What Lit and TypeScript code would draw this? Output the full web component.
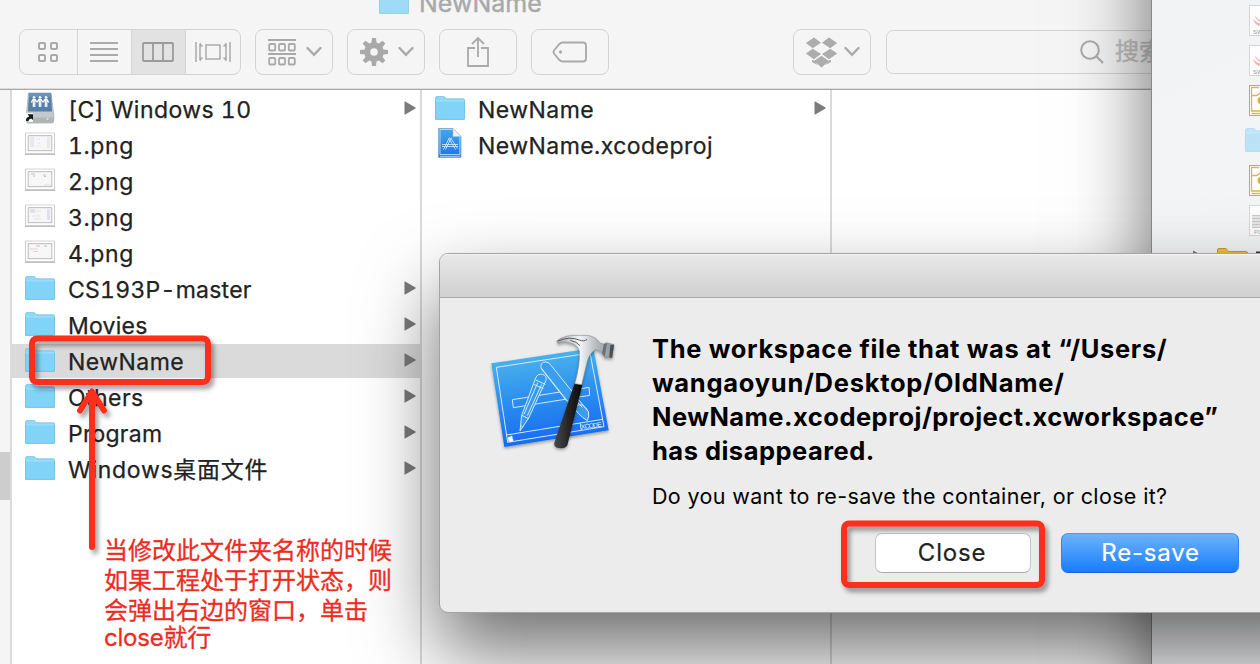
import { LitElement, html, svg, css } from "lit";
import { customElement, property } from "lit/decorators.js";

type Kind = "drive" | "image" | "folder" | "project";
interface Entry { name: string; kind: Kind; parent?: boolean; selected?: boolean; tint?: number; fit: string }

const FIRST: Entry[] = [
  { name: "[C] Windows 10", kind: "drive", parent: true, fit: "word" },
  { name: "1.png", kind: "image", tint: 0, fit: "file" },
  { name: "2.png", kind: "image", tint: 1, fit: "file" },
  { name: "3.png", kind: "image", tint: 2, fit: "file" },
  { name: "4.png", kind: "image", tint: 3, fit: "file" },
  { name: "CS193P-master", kind: "folder", parent: true, fit: "tight" },
  { name: "Movies", kind: "folder", parent: true, fit: "tight" },
  { name: "NewName", kind: "folder", parent: true, selected: true, fit: "word" },
  { name: "Others", kind: "folder", parent: true, fit: "word" },
  { name: "Program", kind: "folder", parent: true, fit: "tight" },
  { name: "Windows桌面文件", kind: "folder", parent: true, fit: "wide" },
];
const SECOND: Entry[] = [
  { name: "NewName", kind: "folder", parent: true, fit: "word" },
  { name: "NewName.xcodeproj", kind: "project", fit: "word" },
];

const folder = () => html`<svg width="30" height="26" viewBox="0 0 30 26">
  <path d="M0.5 3Q0.5 1.5 2 1.5H8.5Q10 1.5 10.5 2.8T12 3.8H28.5Q29.5 3.8 29.5 5V8H0.5Z" fill="#8ed8f8" stroke="#79c5e6" stroke-width=".8"/>
  <path d="M0.5 6H29.5V23.5Q29.5 24.5 28.5 24.5H1.5Q.5 24.5 .5 23.5Z" fill="#82d3f8"/>
  <path d="M0.5 6H29.5" stroke="#9fe2fb"/><path d="M.5 6V24.4H29.5V6" fill="none" stroke="#6fbfe2" stroke-width=".9"/></svg>`;

const drive = () => html`<svg width="30" height="32" viewBox="0 0 30 32">
  <path d="M3.5 1H26L29 25Q29 31 27 31H3Q1 31 1 27Z" fill="#c3c9cb" stroke="#a1a8ab" stroke-width=".7"/>
  <path d="M1.3 25.5H28.8V29.5Q28.7 31 27 31H3Q1.2 31 1.2 29Z" fill="#aeb5b6"/>
  <path d="M4 1H26L27 19.5H3Z" fill="#557fa9"/><path d="M4 1H26L26.3 5H3.8Z" fill="#6c93b8"/>
  <g stroke="#fff" fill="#fff" stroke-linecap="round"><circle cx="9" cy="5.4" r=".9"/><circle cx="15" cy="5.4" r=".9"/><circle cx="21" cy="5.4" r=".9"/>
  <path fill="none" stroke-width="1.2" d="M6.5 10L8 7.4H10L12 10L14 7.4H16L18 10L20 7.4H22L23.5 10M8.3 8V14.5M9.8 8V14.5M14.3 8V14.5M15.8 8V14.5M20.3 8V14.5M21.8 8V14.5"/></g>
  <path d="M0 21H8V30H0Z" fill="#fff" opacity=".9"/><path d="M1 29Q.5 25.5 4.2 24.4L2.6 22.2H8V28L6.2 26.4Q3.4 27 3.3 29.6Z" fill="#181818"/>
  <circle cx="22.5" cy="27" r="1" fill="#e4e8e6"/></svg>`;

const THUMBS = [
  svg`<path d="M5 5h4v10H5zM22 5h3v11h-3z" fill="#e6e7f0"/><path d="M11 7h4M12 11h3M10 14h6" stroke="#e6e7ea"/>`,
  svg`<path d="M6 6h4M8 8h2M18 7h3M19 8.500h2" stroke="#c6c6ba"/><path d="M19 17h7" stroke="#ecd8d8"/>`,
  svg`<path d="M5 5h5v4H5zM22 5h3v11h-3z" fill="#dfe1ee"/><path d="M11 7h5M7 12h8M9 15h7" stroke="#e4e5ec"/>`,
  svg`<path d="M11 6h4M19 6h3" stroke="#cdbcc4"/><path d="M5 9h8M8 11.500h5" stroke="#eccccc"/>`,
];
const thumb = (n: number) => html`<svg width="30" height="24" viewBox="0 0 30 24">
  <rect x="0" y="1.500" width="30" height="21.500" fill="#b0b0b0" opacity=".8"/><rect x=".5" y="1" width="29" height="20.500" fill="#fff" stroke="#c4c4c4" stroke-width=".7"/>
  <rect x="3.200" y="3.700" width="23.600" height="15" fill="#f7f7f7" stroke="#b4b4b4" stroke-width=".9"/>${THUMBS[n]}</svg>`;

const project = () => html`<svg width="30" height="32" viewBox="0 0 30 32">
  <defs><linearGradient id="pj" x2="0" y2="1"><stop stop-color="#45a9ea"/><stop offset="1" stop-color="#1976f0"/></linearGradient></defs>
  <path d="M3.500 .5H18L26 8.500V29.500H3.500Z" fill="url(#pj)" stroke="#7fa5c4" stroke-width=".8"/>
  <path d="M17.500 1.500H5V26.500H24.800V9" fill="none" stroke="#c9e5fb" stroke-width=".8"/><path d="M5 28.300H25" stroke="#c9e5fb" stroke-width=".8"/>
  <path d="M18 .5L26 8.500H18Z" fill="#f1f1f1" stroke="#bcc3ca" stroke-width=".5"/>
  <path d="M7 16.500H23M7 18.500H23M14.500 9.500L8.500 21.500M16.500 9.500L10.500 21.500M14 10.500L20.500 21.500M16 10.500L22.500 20.500" fill="none" stroke="#dceefd" stroke-width=".8"/></svg>`;

@customElement("finder-column")
class FinderColumn extends LitElement {
  @property({ attribute: false }) entries: Entry[] = [];
  static styles = css`
    :host { display: flex; flex-direction: column; gap: 2px; padding-top: 2px; box-sizing: border-box; border-right: 2px solid #dadada; }
    .row { display: grid; grid-template-columns: 30px 1fr 12px; column-gap: 13px; align-items: center; height: 34px; flex: none; padding: 0 4px 0 13px; }
    .selected { background: #dadada; }
    .icon { display: flex; justify-content: center; align-items: center; height: 32px; margin-top: -2px; }
    .label { white-space: nowrap; line-height: 34px; padding-top: 1px; height: 33px; font-feature-settings: "tnum"; -webkit-text-stroke: .25px #222; }
    .arrow { display: block; margin-top: -2px; }
    .word { letter-spacing: .45px; }
    .file { letter-spacing: .6px; }
    .tight { letter-spacing: .25px; }
    .wide { letter-spacing: .72px; }
  `;
  icon(e: Entry) {
    if (e.kind === "drive") return drive();
    if (e.kind === "image") return thumb(e.tint ?? 0);
    if (e.kind === "project") return project();
    return folder();
  }
  render() {
    return this.entries.map(e => html`<div class="row ${e.selected ? "selected" : ""}">
      <span class="icon">${this.icon(e)}</span><span class="label ${e.fit}">${e.name}</span>
      ${e.parent ? html`<svg class="arrow" width="12" height="14" viewBox="0 0 12 14"><path d="M.5 .8Q.5 .2 1.200 .5L11.500 6.400Q12 7 11.500 7.500L1.200 13.500Q.5 13.800 .5 13.200Z" fill="#7b7b7b"/></svg>` : ""}
    </div>`);
  }
}

const chevron = html`<svg width="16" height="12" viewBox="0 0 16 12"><path d="M1.500 2L8 8.800L14.500 2" fill="none" stroke="#a9a9a9" stroke-width="2.400" stroke-linecap="round"/></svg>`;

@customElement("finder-window")
class FinderWindow extends LitElement {
  static styles = css`
    :host { display: grid; grid-template-rows: 88px 1fr; background: #fff; overflow: hidden; }
    .head { background: #f5f5f5; border-bottom: 1px solid #a8a8a8; box-shadow: inset 0 -1px #dcdcdc; box-sizing: border-box; height: 90px; }
    .title { display: flex; gap: 10px; height: 29px; padding-left: 379px; color: #a9a9a9; font-size: 25px; line-height: 28px; -webkit-text-stroke: .4px #a9a9a9; }
    .title svg { margin-top: -11px; opacity: .75; }
    .title span { margin-top: -11px; }
    .tools { display: flex; padding-left: 19px; }
    .btn, .segs { box-sizing: border-box; height: 46px; border: 1px solid #d4d4d4; border-radius: 8px; display: flex; align-items: center; }
    .btn { width: 78px; margin-right: 14px; justify-content: center; gap: 10px; }
    .menu { padding-left: 2px; }
    .segs { width: 222px; margin-right: 14px; overflow: hidden; }
    .seg { display: flex; align-items: center; justify-content: center; height: 100%; width: 54px; box-sizing: border-box; border-right: 1px solid #d4d4d4; }
    .seg:first-child { width: 58px; padding-right: 1px; }
    .seg:nth-child(2), .seg:nth-child(3) { padding-right: 1px; }
    .seg:last-child { border: 0; flex: 1; }
    .on { background: #e2e2e2; }
    .drop { margin: 0 15px 0 170px; gap: 6px; }
    .search { box-sizing: border-box; width: 400px; height: 44px; margin-top: 1px; border: 1px solid #d4d4d4; border-radius: 7px; flex: none; display: flex; align-items: center; gap: 11px; padding-left: 193px; color: #c2c2c2; font-size: 24px; -webkit-text-stroke: .4px #c2c2c2; }
    .cols { display: grid; grid-template-columns: 12px 410px 410px 1fr; margin-top: 2px; }
    .side { background: #f5f5f5; border-right: 2px solid #dadada; padding-top: 362px; box-sizing: border-box; }
    .thumb { height: 48px; background: #cdcdcd; }
  `;
  render() {
    const box = (x: number, y: number) => svg`<rect x=${x} y=${y} width="6" height="6.500" rx="1"/>`;
    return html`
      <div class="head">
        <div class="title">${folder()}<span>NewName</span></div>
        <div class="tools">
          <div class="segs">
            <span class="seg"><svg width="22" height="22" viewBox="0 0 22 22" fill="none" stroke="#aaa" stroke-width="2"><rect x="2" y="2" width="6" height="6" rx="1"/><rect x="14" y="2" width="6" height="6" rx="1"/><rect x="2" y="14" width="6" height="6" rx="1"/><rect x="14" y="14" width="6" height="6" rx="1"/></svg></span>
            <span class="seg"><svg width="28" height="20" viewBox="0 0 28 20" stroke="#aaa" stroke-width="2"><path d="M0 1H28M0 7H28M0 13H28M0 19H28"/></svg></span>
            <span class="seg on"><svg width="32" height="20" viewBox="0 0 32 20" fill="none" stroke="#9b9b9b" stroke-width="1.800"><rect x="1" y="1" width="30" height="18" rx="1"/><path d="M11 1V19M21 1V19"/></svg></span>
            <span class="seg"><svg width="38" height="22" viewBox="0 0 38 22" fill="none" stroke="#aaa" stroke-width="1.500"><rect x="12" y="4" width="14" height="14"/><path d="M2 1V21M36 1V21M6 2.500V19.500M32 2.500V19.500"/><path d="M6 1.500L9.300 5.500H6ZM6 20.500L9.300 16.500H6ZM32 1.500L28.700 5.500H32ZM32 20.500L28.700 16.500H32Z" fill="#aaa" stroke="none"/></svg></span>
          </div>
          <div class="btn menu"><svg width="28" height="27" viewBox="0 0 28 27" fill="none" stroke="#a9a9a9" stroke-width="1.800"><path d="M0 1H28M0 15H28"/>${box(1.2, 5)}${box(11, 5)}${box(20.8, 5)}${box(1.2, 19)}${box(11, 19)}${box(20.8, 19)}</svg>${chevron}</div>
          <div class="btn menu"><svg width="28" height="28" viewBox="-14 -14 28 28"><circle r="6.800" fill="none" stroke="#a9a9a9" stroke-width="6"/>${[0, 45, 90, 135].map(a => svg`<path d="M-2.600 -9L-2 -14H2L2.600 -9ZM-2.600 9L-2 14H2L2.600 9Z" fill="#a9a9a9" transform="rotate(${a})"/>`)}</svg>${chevron}</div>
          <div class="btn"><svg width="24" height="32" viewBox="0 0 24 32" fill="none" stroke="#aaa" stroke-width="1.800"><path d="M9 12H2V30H22V12H15M12 21V2M6 8L12 2L18 8"/></svg></div>
          <div class="btn"><svg width="36" height="22" viewBox="0 0 36 22" fill="none" stroke="#aaa" stroke-width="1.900"><path d="M10.500 1.500H31Q34 1.500 34 4.500V17.500Q34 20.500 31 20.500H10.500Q9 20.500 7.500 19L2 12.500Q1 11 2 9.500L7.500 3Q9 1.500 10.500 1.500Z"/><circle cx="8.500" cy="11" r="1.200" fill="#aaa" stroke-width="1"/></svg></div>
          <div class="btn drop"><svg width="33" height="31" viewBox="0 0 33 31" fill="#acacac"><path d="M9 .5L16 5.700L7.700 11.300L.8 6ZM24 .5L32.200 6L25.300 11.300L17 5.700ZM.8 16.500L7.700 11.800L16 17L9 22.200ZM25.300 11.800L32.200 16.500L24 22.200L17 17ZM16.500 18.700L24 24L16.500 30.500L9 24ZM7 23L9 23.500L12.500 28L7 25ZM26 23L24 23.500L20.500 28L26 25Z"/></svg>${chevron}</div>
          <div class="search"><svg width="24" height="26" viewBox="0 0 24 26" fill="none" stroke="#aaa" stroke-width="2"><circle cx="10" cy="11" r="8.800"/><path d="M16.500 17.500L23 24"/></svg><span>搜索</span></div>
        </div>
      </div>
      <div class="cols">
        <div class="side"><div class="thumb"></div></div>
        <finder-column .entries=${FIRST}></finder-column>
        <finder-column .entries=${SECOND}></finder-column>
      </div>`;
  }
}

@customElement("editor-window")
class EditorWindow extends LitElement {
  static styles = css`
    :host { display: block; background: linear-gradient(150deg, #eff1f3, #f3f4f6 30%, #f1f2f4); border-left: 1px solid #888; box-sizing: border-box; box-shadow: 0 0 76px rgba(0,0,0,.57); }
    .item { height: 40px; display: flex; align-items: center; padding-left: 97px; }
    .dir { padding-left: 93px; opacity: .5; }
    .group { padding-left: 41px; align-items: flex-start; padding-top: 7px; }
    svg { flex: none; }
  `;
  render() {
    const swift = html`<svg width="30" height="31" viewBox="0 0 30 31"><rect x=".5" y=".5" width="29" height="30" fill="#fdfdfd" stroke="#d4d5d7"/><path d="M3.500 14Q9 19 12 18Q7 14 5 10Q10 15 15 18L14 21Q7 22 3.500 14ZM11 10Q14 12 15 16Z" fill="#f6b2ac"/><text x="4" y="28.500" font-size="6" fill="#999" font-family="Liberation Sans">SWIFT</text></svg>`;
    const board = html`<svg width="30" height="31" viewBox="0 0 30 31"><rect x=".5" y=".5" width="29" height="30" fill="#fff" stroke="#b8a88a"/><path d="M10 2.500H2.500V26H30M2.500 28.500H30M2.500 10.500H8L11 8" fill="none" stroke="#e2b34a" stroke-width="1.300"/><circle cx="12.500" cy="15.500" r="4" fill="#dfae38"/></svg>`;
    const plist = html`<svg width="30" height="31" viewBox="0 0 30 31"><rect x=".5" y=".5" width="29" height="30" fill="#fcfcfc" stroke="#d8d8d8"/><rect x="3" y="10" width="26" height="12" fill="#e6e6e6"/><path d="M3 10.500H30M3 13.500H30M3 16.500H30M3 19.500H30M3 22.500H30" stroke="#c6c6c6"/><text x="5" y="29" font-size="6" fill="#aaa" font-family="Liberation Sans">PLIST</text></svg>`;
    return html`
      <div class="item">${swift}</div><div class="item">${swift}</div><div class="item">${board}</div>
      <div class="item dir">${folder()}</div><div class="item">${board}</div><div class="item">${plist}</div>
      <div class="item group"><svg width="80" height="24" viewBox="0 0 80 24"><path d="M0 3.500L12 10L0 17Z" fill="#777"/><path d="M24.500 23V3Q24.500 1.500 26 1.500H33L35.500 4.500H53Q54.500 4.500 54.500 6V23Z" fill="#eebf40" stroke="#c99a2a"/><path d="M63 5.500H78" stroke="#333" stroke-width="2"/></svg></div>`;
  }
}

@customElement("alert-dialog")
class AlertDialog extends LitElement {
  static styles = css`
    :host { display: block; box-sizing: border-box; background: #ececec; border: 1px solid #a3a3a3; border-radius: 9px; box-shadow: 0 38px 78px rgba(0,0,0,.57); overflow: hidden; }
    .bar { height: 43px; background: linear-gradient(#e9e9e9, #cfcfcf); border-bottom: 1px solid #ababab; box-shadow: inset 0 1px #f3f3f3; }
    .body { display: flex; padding: 22px 0 0 30px; }
    .app { flex: none; }
    .copy { margin: 12px 0 0 12px; color: #000; }
    h2 { margin: 0; font-size: 25.5px; line-height: 34px; font-weight: 700; white-space: nowrap; }
    h2 span { display: block; }
    .l1 { letter-spacing: .65px; }
    .l2 { letter-spacing: .72px; }
    .l3, .l4 { letter-spacing: .48px; }
    p { margin: 13px 0 22px; font-size: 21.5px; line-height: 30px; white-space: nowrap; letter-spacing: .35px; }
    .acts { display: flex; gap: 30px; padding-left: 223px; }
    .b { box-sizing: border-box; height: 40px; width: 156px; border: 1px solid #c6c6c6; border-bottom-color: #ababab; border-radius: 7px; background: #fff; font-size: 24px; line-height: 38px; text-align: center; color: #222; letter-spacing: .8px; text-indent: -2px; -webkit-text-stroke: .2px; }
    .main { width: 178px; background: linear-gradient(#6eb3f9, #167dfd); border-color: #4a9bf0 #2f84ee #1a64d8; color: #fff; text-indent: 1px; }
  `;
  render() {
    return html`<div class="bar"></div><div class="body">
      <svg class="app" width="170" height="150" viewBox="0 0 510 450">
        <defs>
          <linearGradient id="bp" x2=".15" y2="1"><stop stop-color="#52bdec"/><stop offset=".5" stop-color="#2f92ee"/><stop offset="1" stop-color="#176bf1"/></linearGradient>
          <linearGradient id="st" x1="0" x2="1"><stop stop-color="#9b9fa3"/><stop offset=".4" stop-color="#f4f6f7"/><stop offset=".7" stop-color="#b4b9be"/><stop offset="1" stop-color="#8c9196"/></linearGradient>
          <linearGradient id="hd" x1="0" x2="1"><stop stop-color="#4a4a4a"/><stop offset=".5" stop-color="#262626"/><stop offset="1" stop-color="#0a0a0a"/></linearGradient>
          <filter id="sh" x="-10%" y="-10%" width="125%" height="125%"><feDropShadow dx="0" dy="5" stdDeviation="5" flood-opacity=".35"/></filter>
        </defs>
        <path d="M64 130L370 84L416 331L103 381Z" fill="url(#bp)" filter="url(#sh)"/>
        <g fill="none" stroke="#d3eafb" stroke-width="3" stroke-linejoin="round">
          <path d="M79 142L360 99L402 320L113 367Z"/><path d="M109 345L398 298M330 309L334 330"/>
          <path d="M127 239L357 202L359 226L130 263Z"/>
          <path fill="#3b9ded" d="M213 143Q211 126 227 126Q237 126 243 136L355 275Q359 288 352 302Q336 292 326 281L288 238Z"/><path d="M213 145L290 243M311 236L337 262M318 258Q340 245 355 275"/>
          <path fill="#359aee" d="M197 174Q203 160 218 163Q231 168 228 181L176 294L150 333L155 286Z"/><path d="M197 180L226 193M191 193L220 206M155 286L176 296M162 283L203 188M172 287L215 193M153 316L158 322"/>
        </g>
        <text x="334" y="328" transform="rotate(-8 334 328)" font-family="Liberation Sans" font-size="20" textLength="62" fill="#e9f5ff">XCODE</text>
        <path d="M114 354Q116 349 120 351L125 348Q129 350 127 355L130 361Q127 366 121 365L116 364ZM120 348L124 344" fill="#fff" stroke="#fff"/>
        <g filter="url(#sh)">
          <path d="M314 190L337 194L292 376Q285 388 266 384Q250 381 253 368Z" fill="url(#hd)"/>
          <path d="M260 63Q287 42 329 47L350 46Q373 49 383 61Q390 73 402 72L410 68L432 74L426 114L404 112L396 99Q387 91 376 88Q357 103 353 120L335 194L314 191Q331 133 328 93Q323 74 301 69Q277 62 266 71Z" fill="url(#st)" stroke="#777" stroke-width="1.500"/>
          <path d="M264 63Q299 48 328 60Q343 66 351 58M301 61Q320 65 330 77" fill="none" stroke="#5a5c5f" stroke-width="3"/><path d="M402 72L396 99L404 111L411 70Z" fill="#6b7075"/><path d="M421 75L432 74L426 114L418 112Z" fill="#4b4e52"/>
        </g>
      </svg>
      <div class="copy">
        <h2><span class="l1">The workspace file that was at “/Users/</span><span class="l2">wangaoyun/Desktop/OldName/</span><span class="l3">NewName.xcodeproj/project.xcworkspace”</span><span class="l4">has disappeared.</span></h2>
        <p>Do you want to re-save the container, or close it?</p>
        <div class="acts"><div class="b">Close</div><div class="b main">Re-save</div></div>
      </div></div>`;
  }
}

@customElement("app-root")
class AppRoot extends LitElement {
  static styles = css`
    :host { display: block; position: relative; width: 1260px; height: 664px; overflow: hidden; background: #fff; color: #222; font: 23px/1.2 Inter, "Noto Sans CJK SC", sans-serif; }
    finder-window { position: absolute; inset: 0; }
    editor-window { position: absolute; left: 1151px; top: -150px; width: 400px; height: 1000px; padding-top: 150px; }
    alert-dialog { position: absolute; left: 439px; top: 253px; width: 1000px; height: 360px; }
    .marks { position: absolute; left: 0; top: 0; }
    .note { position: absolute; left: 104px; top: 536px; color: #ee2b1f; font-size: 24px; white-space: nowrap; -webkit-text-stroke: .3px #ee2b1f; }
    .note span { display: block; height: 30px; line-height: 30px; }
    .note .last { height: 24px; line-height: 24px; letter-spacing: -.2px; }
  `;
  render() {
    return html`<finder-window></finder-window><editor-window></editor-window><alert-dialog></alert-dialog>
      <svg class="marks" width="1260" height="664" viewBox="0 0 1260 664">
        <defs><filter id="drop" x="-20%" y="-20%" width="150%" height="150%"><feDropShadow dx="3" dy="4" stdDeviation="2.500" flood-opacity=".4"/></filter>
        <filter id="line" filterUnits="userSpaceOnUse" x="60" y="380" width="70" height="190"><feDropShadow dx="3" dy="4" stdDeviation="2.500" flood-opacity=".4"/></filter></defs>
        <g fill="none" stroke="#fc2d1f" stroke-width="6">
          <rect x="32" y="338.500" width="176" height="43.500" rx="5" filter="url(#drop)"/><rect x="844" y="523.500" width="198" height="61.500" rx="5" filter="url(#drop)"/>
          <path d="M92 547V394M80 410.500L92 391.500L104 410.500" filter="url(#line)" stroke-linecap="round" stroke-linejoin="round"/>
        </g>
      </svg>
      <div class="note"><span>当修改此文件夹名称的时候</span><span>如果工程处于打开状态，则</span><span>会弹出右边的窗口，单击</span><span class="last">close就行</span></div>`;
  }
}
